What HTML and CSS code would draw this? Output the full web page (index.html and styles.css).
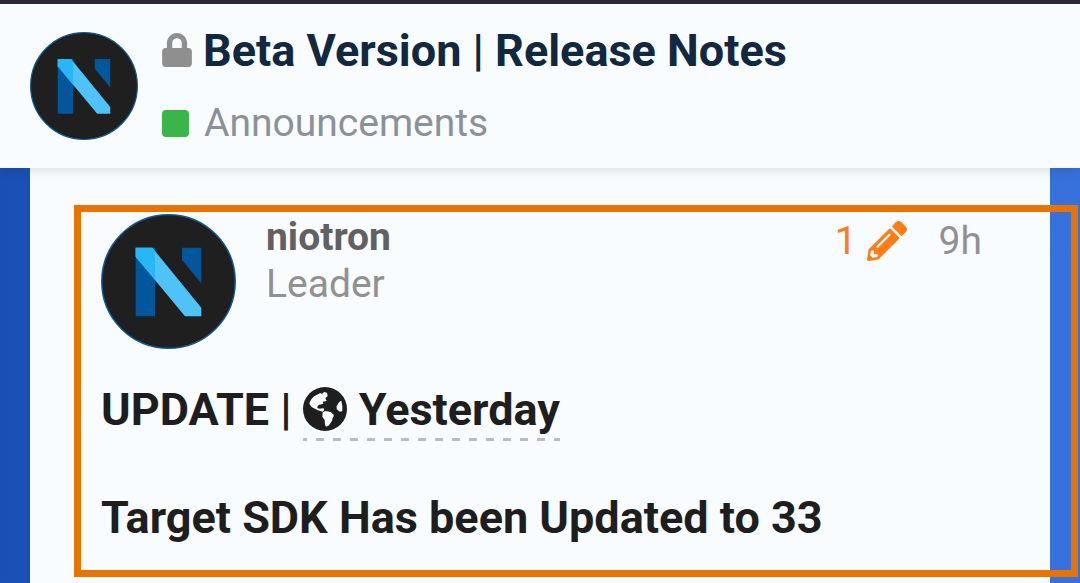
FILE: index.html
```html
<!DOCTYPE html>
<html lang="en">

<head>
    <meta charset="UTF-8">
    <meta name="viewport" content="width=device-width, initial-scale=1.0">
    <title>Beta Version | Release Notes</title>
    <link rel="stylesheet" href="styles.css">
</head>

<body>
    <!-- shared logo, used in the header and in the post -->
    <svg class="defs" aria-hidden="true">
        <symbol id="logo" viewBox="0 0 135 135">
            <circle cx="67.5" cy="67.5" r="66.7" fill="#1f1f1f" stroke="#0b5596" stroke-width="1.5" />
            <path fill="#01579b" d="M34.7 33.7H54v68.6H34.7zM81 33.7h19.3v35.6L81 46z" />
            <path fill="#4fc3f7" d="M34.7 33.7h16.6l49 60v8.6H84L34.7 42.7z" />
            <path fill="#29b6f6" d="M34.7 33.7h16.6L54 37v29L34.7 42.7z" />
        </symbol>
    </svg>

    <header class="header">
        <svg class="header-logo" role="img" aria-label="Niotron"><use href="#logo" /></svg>
        <div class="header-info">
            <h1 class="title">
                <svg class="lock" viewBox="0 0 448 512" aria-hidden="true"><path d="M400 224h-24v-72C376 68.2 307.8 0 224 0S72 68.2 72 152v72H48c-26.5 0-48 21.5-48 48v192c0 26.5 21.5 48 48 48h352c26.5 0 48-21.5 48-48V272c0-26.5-21.5-48-48-48zm-104 0H152v-72c0-39.7 32.3-72 72-72s72 32.3 72 72v72z" /></svg>
                <a href="#">Beta Version | Release Notes</a>
            </h1>
            <a class="category" href="#"><span class="badge"></span>Announcements</a>
        </div>
    </header>

    <main class="page">
        <article class="post">
            <div class="post-head">
                <svg class="avatar" role="img" aria-label="niotron"><use href="#logo" /></svg>
                <div class="names">
                    <a class="username" href="#">niotron</a>
                    <span class="user-title">Leader</span>
                </div>
                <div class="post-info">
                    <button class="edits" type="button">1
                        <svg class="pencil" viewBox="0 0 512 512" aria-hidden="true"><path d="M497.9 142.1l-46.1 46.1c-4.7 4.7-12.3 4.7-17 0l-111-111c-4.7-4.7-4.7-12.3 0-17l46.1-46.1c18.7-18.7 49.1-18.7 67.9 0l60.1 60.1c18.8 18.7 18.8 49.1 0 67.9zM284.2 99.8L21.6 362.4.4 483.9c-2.9 16.4 11.4 30.6 27.8 27.8l121.5-21.3 262.6-262.6c4.7-4.7 4.7-12.3 0-17l-111-111c-4.8-4.7-12.4-4.7-17.1 0zM124.1 339.9c-5.5-5.5-5.5-14.3 0-19.8l154-154c5.5-5.5 14.3-5.5 19.8 0s5.5 14.3 0 19.8l-154 154c-5.5 5.5-14.3 5.5-19.8 0zM88 424h48v36.3l-64.5 11.3-31.1-31.1L51.7 376H88v48z" /></svg>
                    </button>
                    <a class="age" href="#">9h</a>
                </div>
            </div>
            <h2 class="line">UPDATE |
                <span class="date">
                    <svg class="globe" viewBox="0 0 132 132" aria-hidden="true">
                        <circle cx="66" cy="66" r="66" />
                        <path class="land" d="M19 49q6-16 16-22l17-9 5 3 6-6 9 2 2 10-7 7 4 8-12 2 2 6-14 4-5 7 6 4 14-1 2 5-5 5-16-5-16-8q-7-6-8-12z" />
                        <path class="land" d="M59 76l9-4 15 3 9 8q2 5-3 9l-2 9-9 14-8 4q-4-2-4-8l-1-12-7-10z" />
                        <path class="land" d="M101 58l6-11q3-5 8-6 4 14 3 31-6 3-11 0l-6-6z" />
                    </svg>
                    <span>Yesterday</span>
                </span>
            </h2>
            <h2 class="line">Target SDK Has been Updated to 33</h2>
        </article>
    </main>
</body>

</html>
```
FILE: styles.css
```css
* {
    box-sizing: border-box;
}

body {
    margin: 0;
    min-height: 100vh;
    display: flex;
    flex-direction: column;
    font-family: Roboto, "Liberation Sans", sans-serif;
    font-size: 39px;
    line-height: 47px;
    color: #1e1e1e;
    background: linear-gradient(90deg, #1a50b5, #3772dc);
}

a {
    color: inherit;
    text-decoration: none;
}

h1, h2 {
    margin: 0;
    font-size: 45px;
    line-height: 62px;
    font-weight: bold;
}

.defs {
    display: none;
}

.header {
    display: flex;
    align-items: flex-start;
    gap: 24px;
    padding: 16px 30px 21px;
    border-top: 4px solid #2b2833;
    background: #f9fcff;
    box-shadow: 0 2px 12px rgba(0, 0, 0, 0.13);
    z-index: 1;
}

.header-logo {
    width: 108px;
    height: 108px;
    margin-top: 12px;
    flex-shrink: 0;
}

.header-info {
    display: flex;
    flex-direction: column;
    gap: 18px;
}

.title {
    display: flex;
    align-items: center;
    gap: 11px;
    color: #11283f;
}

.lock {
    width: 30px;
    height: 34px;
    margin-bottom: 2px;
    fill: #8f8f8f;
}

.category {
    display: flex;
    align-items: center;
    gap: 15px;
    color: #8b9198;
}

.badge {
    width: 27px;
    height: 27px;
    border-radius: 4px;
    background: #3ab54a;
}

.page {
    flex: 1;
    margin: 0 30px;
    padding-top: 37px;
    background: #f9fcff;
}

/* the frame runs past the right edge of the page column */
.post {
    margin: 0 -28px 0 44px;
    padding: 2px 89px 21px 20px;
    border: 7px solid #e77300;
}

.post-head {
    display: flex;
    align-items: flex-start;
    margin-bottom: 30px;
}

.avatar {
    width: 135px;
    height: 135px;
    margin-right: 30px;
    flex-shrink: 0;
}

.names {
    display: flex;
    flex-direction: column;
}

.username {
    font-weight: bold;
    color: #616161;
}

.user-title, .age {
    color: #919191;
}

.post-info {
    display: flex;
    align-items: center;
    gap: 32px;
    margin-left: auto;
    padding-top: 4px;
}

.edits {
    display: flex;
    align-items: center;
    gap: 10px;
    padding: 0;
    border: none;
    background: none;
    font: inherit;
    color: #ff7d19;
    cursor: pointer;
}

.pencil {
    width: 40px;
    height: 40px;
    margin-bottom: 2px;
    fill: #ff7d19;
}

.line {
    display: flex;
    gap: 11px;
}

.line + .line {
    margin-top: 46px;
}

.date {
    display: flex;
    align-items: center;
    gap: 12px;
    background: repeating-linear-gradient(90deg, #bbb 0 4px, transparent 4px 13px, #bbb 13px 17px) 0 100% / 100% 3px no-repeat;
}

.globe {
    width: 44px;
    height: 44px;
    margin-bottom: 2px;
    fill: #1e1e1e;
}

.land {
    fill: #f9fcff;
}
```
